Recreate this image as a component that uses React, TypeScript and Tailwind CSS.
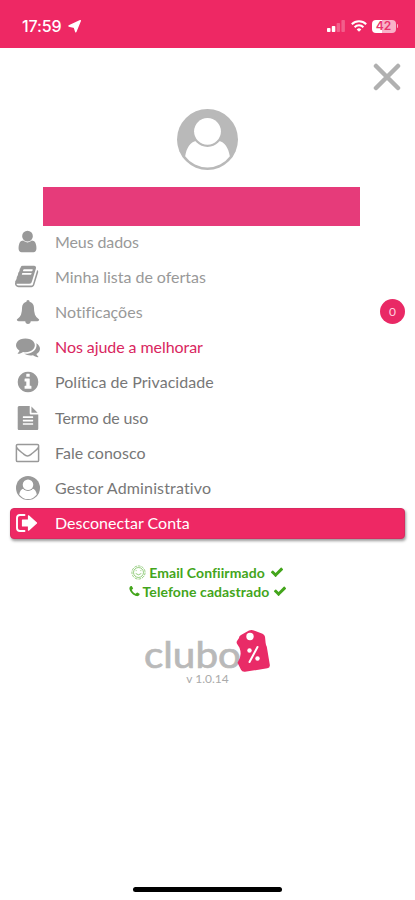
import React from "react";

type IconProps = { className?: string };

const GLYPHS = {
  user: "M1536 1399q0 109-62.500 187t-150.500 78h-854q-88 0-150.500-78t-62.500-187q0-85 8.500-160.500t31.500-152 58.500-131 94-89 134.500-34.500q131 128 313 128t313-128q76 0 134.500 34.500t94 89 58.500 131 31.500 152 8.500 160.500zm-256-887q0 159-112.500 271.500t-271.500 112.500-271.500-112.500-112.500-271.500 112.500-271.500 271.500-112.500 271.500 112.500 112.500 271.500z",
  book: "M1639 478q40 57 18 129l-275 906q-19 64-76.500 107.500t-122.500 43.500h-923q-77 0-148.500-53.500t-99.500-131.500q-24-67-2-127 0-4 3-27t4-37q1-8-3-21.500t-3-19.500q2-11 8-21t16.500-23.500 16.500-23.500q23-38 45-91.500t30-91.500q3-10 .5-30t-.5-28q3-11 17-28t17-23q21-36 42-92t25-90q1-9-2.500-32t.5-28q4-13 22-30.500t22-22.500q19-26 42.500-84.500t27.500-96.500q1-8-3-25.500t-2-26.500q2-8 9-18t18-23 17-21q8-12 16.500-30.500t15-35 16-36 19.500-32 26.500-23.500 36-11.500 47.500 5.500l-1 3q38-9 51-9h761q74 0 114 56t18 130l-274 906q-36 119-71.500 153.500t-128.500 34.500h-869q-27 0-38 15-11 16-1 43 24 70 144 70h923q29 0 56-15.500t35-41.500l300-987q7-22 5-57 38 15 59 43zm-1064 2q-4 13 2 22.500t20 9.500h608q13 0 25.500-9.500t16.500-22.500l21-64q4-13-2-22.500t-20-9.500h-608q-13 0-25.500 9.500t-16.500 22.500zm-83 256q-4 13 2 22.500t20 9.500h608q13 0 25.500-9.500t16.500-22.500l21-64q4-13-2-22.500t-20-9.500h-608q-13 0-25.500 9.500t-16.500 22.500z",
  bell: "M896 0q55 0 90 38t22 94q150 30 240 145t90 267q0 350 80 550t310 362q0 60-38 94t-90 34h-500q0 85-60 145t-144 60-144-60-60-145h-500q-52 0-90-34t-38-94q230-162 310-362t80-550q0-152 90-267t240-145q-13-56 22-94t90-38z",
  comments: "M1408 768q0 139-94 257t-256.500 186.500-353.500 68.500q-86 0-176-16-124 88-278 128-36 9-86 16h-3q-11 0-20.500-8t-11.500-21q-1-3-1-6.500t.5-6.500 2-6l2.500-5 3.500-5.500 4-5 4.500-5 4-4.500q5-6 23-25t26-29.500 22.500-29 25-38.500 20.500-44q-124-72-195-177t-71-224q0-139 94-257t256.500-186.500 353.500-68.500 353.500 68.500 256.500 186.500 94 257zm384 256q0 120-71 224.500t-195 176.500q10 24 20.500 44t25 38.500 22.500 29 26 29.500 23 25q1 1 4 4.500t4.500 5 4 5 3.500 5.500l2.500 5 2 6 .5 6.500-1 6.500q-3 14-13 22t-22 7q-50-7-86-16-154-40-278-128-90 16-176 16-271 0-472-132 58 4 88 4 161 0 309-45t264-129q125-92 192-212t67-254q0-77-23-152 129 71 204 178t75 230z",
  info: "M1152 1376v-160q0-14-9-23t-23-9h-96v-512q0-14-9-23t-23-9h-320q-14 0-23 9t-9 23v160q0 14 9 23t23 9h96v320h-96q-14 0-23 9t-9 23v160q0 14 9 23t23 9h448q14 0 23-9t9-23zm-128-896v-160q0-14-9-23t-23-9h-192q-14 0-23 9t-9 23v160q0 14 9 23t23 9h192q14 0 23-9t9-23zm640 416q0 209-103 385.500t-279.500 279.500-385.500 103-385.500-103-279.500-279.500-103-385.500 103-385.500 279.500-279.500 385.500-103 385.500 103 279.500 279.500 103 385.500z",
  file: "M1596 476q14 14 28 36h-472v-472q22 14 36 28zm-476 164h544v1056q0 40-28 68t-68 28h-1344q-40 0-68-28t-28-68v-1600q0-40 28-68t68-28h800v544q0 40 28 68t68 28zm160 736v-64q0-14-9-23t-23-9h-704q-14 0-23 9t-9 23v64q0 14 9 23t23 9h704q14 0 23-9t9-23zm0-256v-64q0-14-9-23t-23-9h-704q-14 0-23 9t-9 23v64q0 14 9 23t23 9h704q14 0 23-9t9-23zm0-256v-64q0-14-9-23t-23-9h-704q-14 0-23 9t-9 23v64q0 14 9 23t23 9h704q14 0 23-9t9-23z",
  phone: "M1600 1240q0 27-10 70.500t-21 68.500q-21 50-122 106-94 51-186 51-27 0-53-3.500t-57.500-12.500-47-14.500-55.500-20.500-49-18q-98-35-175-83-127-79-264-216t-216-264q-48-77-83-175-3-9-18-49t-20.500-55.500-14.500-47-12.500-57.500-3.500-53q0-92 51-186 56-101 106-122 25-11 68.500-21t70.500-10q14 0 21 3 18 6 53 76 11 19 30 54t35 63.500 31 53.500q3 4 17.500 25t21.500 35.500 7 28.500q0 20-28.500 50t-62 55-62 53-28.500 46q0 9 5 22.500t8.500 20.500 14 24 11.500 19q76 137 174 235t235 174q2 1 19 11.500t24 14 20.500 8.500 22.500 5q18 0 46-28.500t53-62 55-62 50-28.500q14 0 28.500 7t35.500 21.500 25 17.500q25 15 53.500 31t63.500 35 54 30q70 35 76 53 3 7 3 21z",
  check: "M1671 566q0 40-28 68l-724 724-136 136q-28 28-68 28t-68-28l-136-136-362-362q-28-28-28-68t28-68l136-136q28-28 68-28t68 28l294 295 656-657q28-28 68-28t68 28l136 136q28 28 28 68z",
};

function Glyph({ name, className }: IconProps & { name: keyof typeof GLYPHS }) {
  return (
    <svg className={className} viewBox="0 0 1792 1792" fill="currentColor">
      <path d={GLYPHS[name]} />
    </svg>
  );
}

function Avatar({ className }: IconProps) {
  return (
    <svg className={className} viewBox="0 0 60 60">
      <circle cx="30" cy="30" r="30" fill="currentColor" />
      <path d="M8 46.500C9.500 38 13 32.500 19 31.500c6 6 16 6 22 0 6 1 9.500 6.500 11 15a27.300 27.300 0 0 1-44 0z" fill="#fff" />
      <circle cx="30" cy="22" r="15.300" fill="currentColor" />
      <circle cx="30" cy="22" r="13.200" fill="#fff" />
    </svg>
  );
}

function Envelope({ className }: IconProps) {
  return (
    <svg className={className} viewBox="0 0 24 20" fill="none" stroke="currentColor" strokeWidth="1.500" strokeLinejoin="round">
      <rect x="0.9" y="1.4" width="22.2" height="17.2" rx="1.2" />
      <path d="M1 4.5c2 3 5 4.700 7.500 6.900C10.700 13.300 13.300 13.300 15.500 11.400 18 9.200 21 7.500 23 4.500" />
    </svg>
  );
}

function SignOut({ className }: IconProps) {
  return (
    <svg className={className} viewBox="0 0 22 18" fill="none" stroke="currentColor">
      <path d="M8.500 1H4Q1 1 1 4v10q0 3 3 3h4.500" strokeWidth="1.900" strokeLinecap="round" />
      <path d="M6.500 6h6V1.800L20.500 9l-8 7.200V12h-6z" fill="currentColor" strokeWidth="1.200" strokeLinejoin="round" />
    </svg>
  );
}

function StatusBar() {
  return (
    <header className="flex h-12 items-start justify-between bg-[#ee2864] pl-[22px] pr-[17px] text-white">
      <div className="mt-[16px] flex items-center gap-[4px]">
        <span className="w-[42px] font-['Inter'] text-[16px] font-medium leading-5 tracking-[-0.1px]">17:59</span>
        <svg className="h-[13px] w-[13px]" viewBox="0 0 13 13" fill="currentColor">
          <path d="M12.300.7 7.800 11.800 6.300 7.200 1 6z" stroke="currentColor" strokeWidth="1.400" strokeLinejoin="round" />
        </svg>
      </div>
      <div className="mt-[18px] flex h-4 items-center">
        <svg className="h-[12px] w-[18px]" viewBox="0 0 18 12" fill="currentColor">
          <rect y="8" width="3.500" height="4" rx="0.800" />
          <rect x="4.800" y="6" width="3.500" height="6" rx="0.800" />
          <rect x="9.600" y="3" width="3.500" height="9" rx="0.800" opacity="0.250" />
          <rect x="14.400" width="3.500" height="12" rx="0.800" opacity="0.250" />
        </svg>
        <svg className="ml-[6px] h-[12px] w-[16px]" viewBox="0 0 16 12" fill="none" stroke="currentColor" strokeWidth="2">
          <path d="M.8 4.300a10.200 10.200 0 0 1 14.400 0M3.600 7.200a6.200 6.200 0 0 1 8.800 0" />
          <path d="M8 11.700 5.700 9.400a3.250 3.250 0 0 1 4.600 0z" fill="currentColor" stroke="none" />
        </svg>
        <div className="ml-[5px] flex h-[13px] w-[24px] items-center justify-center rounded-[4px] bg-linear-to-r from-white from-42% to-[#f9b1c8] to-42% font-['Inter'] text-[12px] font-semibold leading-none text-[#e9336c]">
          42
        </div>
        <div className="ml-px h-[4px] w-[1.500px] rounded-r bg-[#f9b1c8]" />
      </div>
    </header>
  );
}

const items = [
  { label: "Meus dados", icon: <Glyph name="user" className="size-[25px]" />, color: "text-[#999]", spacing: "tracking-[-0.1px]" },
  { label: "Minha lista de ofertas", icon: <Glyph name="book" className="size-[25px]" />, color: "text-[#999]", spacing: "tracking-[-0.03px]" },
  { label: "Notificações", icon: <Glyph name="bell" className="size-[24px]" />, color: "text-[#999]", spacing: "tracking-[0.01px]", badge: 0 },
  { label: "Nos ajude a melhorar", icon: <Glyph name="comments" className="size-[24px]" />, color: "text-[#d92660]", spacing: "tracking-[-0.07px]" },
  { label: "Política de Privacidade", icon: <Glyph name="info" className="size-[24px]" />, color: "text-[#777]", spacing: "tracking-[0.05px]" },
  { label: "Termo de uso", icon: <Glyph name="file" className="size-[24px]" />, color: "text-[#777]", spacing: "tracking-[-0.12px]" },
  { label: "Fale conosco", icon: <Envelope className="h-[20px] w-[25px]" />, color: "text-[#777]", spacing: "tracking-[0.02px]" },
  { label: "Gestor Administrativo", icon: <Avatar className="size-[24px]" />, color: "text-[#777]", spacing: "tracking-[0.15px]" },
];

function Logo() {
  return (
    <svg className="h-[42px] w-[126px] overflow-visible" viewBox="0 0 126 42">
      <text x="-1" y="38" textLength="97" lengthAdjust="spacingAndGlyphs" fill="#b9b9b9" stroke="#b9b9b9" strokeWidth="0.700" fontFamily="Lato, sans-serif" fontSize="37">
        clubo
      </text>
      <path d="M94 8q0-2 2-3l8-4.500q2-1 4-.3l9.500 3.500q2 .8 2.500 3l.6 6q.2 2 1.200 4l3 18q.4 3-2.500 3.600L100 41.800q-3 .3-4-2l-3.500-7q5-7 2-15l-2.500-4q-.8-1.500 0-2.800z" fill="#e92b67" />
      <circle cx="105" cy="6.500" r="3.700" fill="#fff" />
      <g fill="#fff">
        <path d="m112.500 17-8 15" stroke="#fff" strokeWidth="2" strokeLinecap="round" />
        <circle cx="104.500" cy="20.500" r="2.200" />
        <circle cx="112.500" cy="28.500" r="2.200" />
      </g>
    </svg>
  );
}

export default function App() {
  return (
    <main className="flex h-[900px] w-full flex-col overflow-hidden bg-white font-['Lato',sans-serif]">
      <StatusBar />

      <div className="flex h-[61px] justify-end pr-[14px] pt-[15px]">
        <svg className="size-[28px] text-[#b0b0b0]" viewBox="0 0 28 28" stroke="currentColor" strokeWidth="4.500" strokeLinecap="round">
          <path d="m3 3 22 22M25 3 3 25" />
        </svg>
      </div>

      <Avatar className="ml-[177px] size-[61px] text-[#b9b9b9]" />
      <div className="ml-[43px] mt-[17px] h-[39px] w-[317px] shrink-0 bg-[#e63b7a]" />

      <nav className="-mt-[2px]">
        {items.map((item) => (
          <div key={item.label} className="flex h-[35.200px] items-center pl-[15px] pr-[10px]">
            <span className="flex w-[25px] justify-center text-[#999]">{item.icon}</span>
            <span className={`ml-[15px] whitespace-nowrap text-[16px] leading-5 ${item.color} ${item.spacing}`}>{item.label}</span>
            {item.badge !== undefined && (
              <span className="ml-auto flex size-[25px] items-center justify-center rounded-full bg-[#e92965] text-[12px] text-[#ffd3e0]">
                {item.badge}
              </span>
            )}
          </div>
        ))}
        <button className="ml-[10px] mt-[2px] flex h-[31px] w-[395px] items-center rounded-[4px] border border-[#d92a60] bg-[#ee2864] pl-[5px] text-white shadow-[1px_2px_3px_rgba(0,0,0,0.400)]">
          <SignOut className="h-[18px] w-[22px]" />
          <span className="ml-[17px] text-[16px] leading-5 tracking-[0.02px]">Desconectar Conta</span>
        </button>
      </nav>

      <section className="mt-[24px] flex flex-col items-center text-[14px] font-bold leading-[19px] text-[#43a51b]">
        <div className="flex items-center">
          <svg className="mr-[3px] size-[15px]" viewBox="0 0 16 16" fill="none" stroke="currentColor" strokeWidth="0.600">
            <circle cx="8" cy="8" r="7" strokeDasharray="3 1" />
            <circle cx="8" cy="8" r="5.300" />
            <path d="M5 6h1m4 0h1M5 9q3 3 6 0" />
          </svg>
          <span className="tracking-[0.08px]">Email Confiirmado</span>
          <Glyph name="check" className="ml-[5px] size-[14px]" />
        </div>
        <div className="flex items-center">
          <Glyph name="phone" className="mr-[2px] size-[13px]" />
          <span className="tracking-[0.09px]">Telefone cadastrado</span>
          <Glyph name="check" className="ml-[4px] size-[14px]" />
        </div>
      </section>

      <footer className="mt-[29px] flex flex-col items-center">
        <Logo />
        <span className="text-[12px] leading-[14px] text-[#aaa]">v 1.0.14</span>
      </footer>

      <div className="mb-[8px] ml-[133px] mt-auto h-[5px] w-[149px] shrink-0 rounded-full bg-black" />
    </main>
  );
}
